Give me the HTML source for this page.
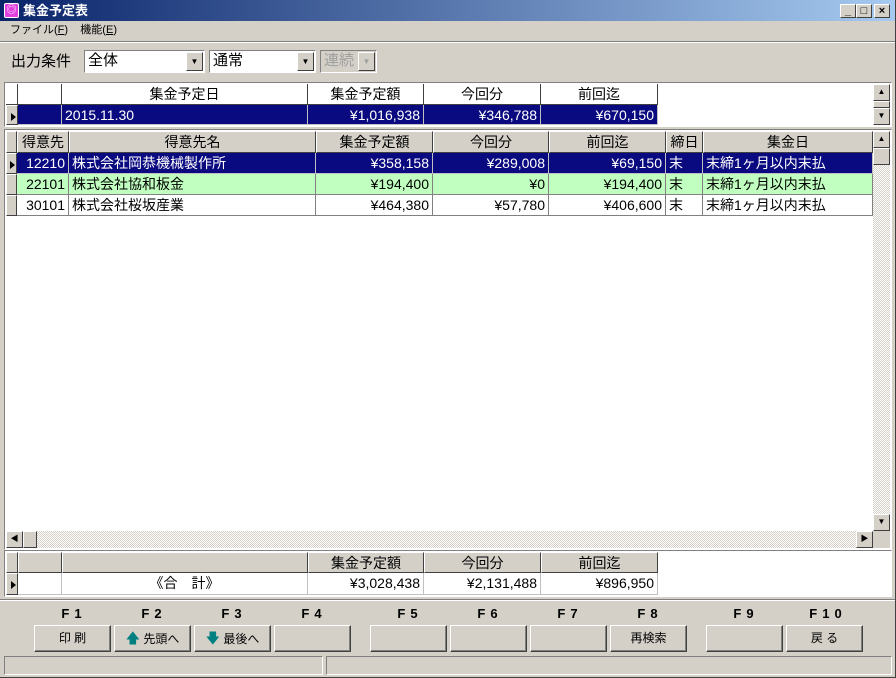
<!DOCTYPE html>
<html><head><meta charset="utf-8"><style>
*{box-sizing:border-box;margin:0;padding:0}
body{width:896px;height:678px;background:#d4d0c8;font-family:"Liberation Sans","Noto Sans CJK JP",sans-serif;position:relative;overflow:hidden;font-size:14px}
.a{position:absolute}
.c{position:absolute;overflow:hidden;white-space:nowrap;line-height:20px;padding:0 3px;border-right:1px solid #808080;border-bottom:1px solid #808080}
.h{background:#d4d0c8;text-align:center;border-top:1px solid #fff;border-left:1px solid #fff;border-right:1px solid #404040;border-bottom:1px solid #404040}
.w{background:#fff}
.s{background:#0a0a80;color:#fff;border-color:#c0c0c0}
.g{background:#c0ffc0}
.r{text-align:right}
.btn{position:absolute;background:#d4d0c8;border-top:1px solid #fff;border-left:1px solid #fff;border-right:1px solid #404040;border-bottom:1px solid #404040;box-shadow:inset -1px -1px 0 #808080;text-align:center;font-size:12px;line-height:25px}
.fk{position:absolute;font-weight:bold;font-size:13px;letter-spacing:5px;text-align:center;width:76px;top:606px}
.sb{position:absolute;background:#d4d0c8;border-top:1px solid #fff;border-left:1px solid #fff;border-right:1px solid #404040;border-bottom:1px solid #404040;font-size:8px;text-align:center;line-height:14px}
.sunk{position:absolute;border-top:1px solid #808080;border-left:1px solid #808080;border-right:1px solid #fff;border-bottom:1px solid #fff}
.tri{display:inline-block;width:0;height:0;border-top:4px solid transparent;border-bottom:4px solid transparent;border-left:5px solid #000;margin-top:6px}
</style></head><body>
<!-- title -->
<div class="a" style="left:0;top:0;width:896px;height:21px;background:linear-gradient(90deg,#0a246a,#a6caf0)"></div>
<div class="a" style="left:4px;top:3px;width:15px;height:15px;background:#e040e0;border:1px solid #fff;border-radius:2px;color:#fff;font-size:10px;text-align:center;line-height:13px">◎</div>
<div class="a" style="left:23px;top:2px;color:#fff;font-weight:bold;font-size:13px;line-height:17px">集金予定表</div>
<div class="sb" style="left:840px;top:4px;width:16px;height:14px;font-size:11px;font-weight:bold;line-height:12px">_</div>
<div class="sb" style="left:856px;top:4px;width:16px;height:14px;font-size:11px;line-height:12px">□</div>
<div class="sb" style="left:874px;top:4px;width:16px;height:14px;font-size:11px;font-weight:bold;line-height:12px">×</div>
<!-- menu -->
<div class="a" style="left:10px;top:23px;font-size:11px;line-height:14px">ファイル(<u>F</u>)&nbsp;&nbsp;&nbsp;&nbsp;機能(<u>E</u>)</div>
<div class="a" style="left:0;top:41px;width:896px;height:2px;border-top:1px solid #808080;border-bottom:1px solid #fff"></div>
<!-- toolbar -->
<div class="a" style="left:11px;top:52px;font-size:15px;line-height:20px">出力条件</div>
<div class="sunk" style="left:84px;top:50px;width:121px;height:23px;background:#fff;font-size:15px;line-height:20px;padding-left:3px">全体</div>
<div class="sb" style="left:186px;top:52px;width:17px;height:19px;line-height:17px">▼</div>
<div class="sunk" style="left:209px;top:50px;width:107px;height:23px;background:#fff;font-size:15px;line-height:20px;padding-left:3px">通常</div>
<div class="sb" style="left:297px;top:52px;width:17px;height:19px;line-height:17px">▼</div>
<div class="sunk" style="left:320px;top:50px;width:57px;height:23px;background:#d4d0c8;color:#a0a0a0;font-size:15px;line-height:20px;padding-left:3px">連続</div>
<div class="sb" style="left:358px;top:52px;width:17px;height:19px;line-height:17px;color:#a0a0a0">▼</div>
<!-- top grid -->
<div class="sunk" style="left:4px;top:82px;width:888px;height:45px;background:#fff"></div>
<div class="c w" style="left:6px;top:84px;width:12px;height:21px;border-right-color:#404040;border-bottom-color:#404040"></div>
<div class="c w" style="left:18px;top:84px;width:44px;height:21px;border-right-color:#404040;border-bottom-color:#404040"></div>
<div class="c w" style="left:62px;top:84px;width:246px;height:21px;text-align:center;border-right-color:#404040;border-bottom-color:#404040">集金予定日</div>
<div class="c w" style="left:308px;top:84px;width:116px;height:21px;text-align:center;border-right-color:#404040;border-bottom-color:#404040">集金予定額</div>
<div class="c w" style="left:424px;top:84px;width:117px;height:21px;text-align:center;border-right-color:#404040;border-bottom-color:#404040">今回分</div>
<div class="c w" style="left:541px;top:84px;width:117px;height:21px;text-align:center;border-right-color:#404040;border-bottom-color:#404040">前回迄</div>
<div class="c h" style="left:6px;top:105px;width:12px;height:20px;padding:0 0 0 3px"><span class="tri"></span></div>
<div class="c s" style="left:18px;top:105px;width:44px;height:20px"></div>
<div class="c s" style="left:62px;top:105px;width:246px;height:20px">2015.11.30</div>
<div class="c s r" style="left:308px;top:105px;width:116px;height:20px">¥1,016,938</div>
<div class="c s r" style="left:424px;top:105px;width:117px;height:20px">¥346,788</div>
<div class="c s r" style="left:541px;top:105px;width:117px;height:20px">¥670,150</div>
<div class="sb" style="left:873px;top:84px;width:17px;height:17px">▲</div>
<div class="sb" style="left:873px;top:101px;width:17px;height:7px"></div>
<div class="sb" style="left:873px;top:108px;width:17px;height:17px">▼</div>
<!-- main grid -->
<div class="sunk" style="left:4px;top:129px;width:888px;height:421px;background:#fff"></div>
<div class="a" style="left:873px;top:131px;width:17px;height:400px;background:repeating-conic-gradient(#d4d0c8 0 25%,#fff 0 50%) 0 0/2px 2px"></div>
<div class="a" style="left:6px;top:531px;width:867px;height:17px;background:repeating-conic-gradient(#d4d0c8 0 25%,#fff 0 50%) 0 0/2px 2px"></div>
<div class="sb" style="left:873px;top:131px;width:17px;height:17px">▲</div>
<div class="sb" style="left:873px;top:148px;width:17px;height:17px"></div>
<div class="sb" style="left:873px;top:514px;width:17px;height:17px">▼</div>
<div class="sb" style="left:6px;top:531px;width:17px;height:17px">◀</div>
<div class="sb" style="left:23px;top:531px;width:14px;height:17px"></div>
<div class="sb" style="left:856px;top:531px;width:17px;height:17px">▶</div>
<div class="a" style="left:873px;top:531px;width:17px;height:17px;background:#d4d0c8"></div>

<div class="c h" style="left:6px;top:131px;width:11px;height:22px"></div>
<div class="c h" style="left:17px;top:131px;width:52px;height:22px;padding:0 1px">得意先</div>
<div class="c h" style="left:69px;top:131px;width:247px;height:22px">得意先名</div>
<div class="c h" style="left:316px;top:131px;width:117px;height:22px">集金予定額</div>
<div class="c h" style="left:433px;top:131px;width:116px;height:22px">今回分</div>
<div class="c h" style="left:549px;top:131px;width:117px;height:22px">前回迄</div>
<div class="c h" style="left:666px;top:131px;width:37px;height:22px;padding:0 1px">締日</div>
<div class="c h" style="left:703px;top:131px;width:170px;height:22px">集金日</div>

<div class="c h" style="left:6px;top:153px;width:11px;height:21px;padding:0 0 0 2px"><span class="tri"></span></div>
<div class="c s r" style="left:17px;top:153px;width:52px;height:21px">12210</div>
<div class="c s" style="left:69px;top:153px;width:247px;height:21px">株式会社岡恭機械製作所</div>
<div class="c s r" style="left:316px;top:153px;width:117px;height:21px">¥358,158</div>
<div class="c s r" style="left:433px;top:153px;width:116px;height:21px">¥289,008</div>
<div class="c s r" style="left:549px;top:153px;width:117px;height:21px">¥69,150</div>
<div class="c s" style="left:666px;top:153px;width:37px;height:21px">末</div>
<div class="c s" style="left:703px;top:153px;width:170px;height:21px">末締1ヶ月以内末払</div>

<div class="c h" style="left:6px;top:174px;width:11px;height:21px"></div>
<div class="c g r" style="left:17px;top:174px;width:52px;height:21px">22101</div>
<div class="c g" style="left:69px;top:174px;width:247px;height:21px">株式会社協和板金</div>
<div class="c g r" style="left:316px;top:174px;width:117px;height:21px">¥194,400</div>
<div class="c g r" style="left:433px;top:174px;width:116px;height:21px">¥0</div>
<div class="c g r" style="left:549px;top:174px;width:117px;height:21px">¥194,400</div>
<div class="c g" style="left:666px;top:174px;width:37px;height:21px">末</div>
<div class="c g" style="left:703px;top:174px;width:170px;height:21px">末締1ヶ月以内末払</div>

<div class="c h" style="left:6px;top:195px;width:11px;height:21px"></div>
<div class="c w r" style="left:17px;top:195px;width:52px;height:21px">30101</div>
<div class="c w" style="left:69px;top:195px;width:247px;height:21px">株式会社桜坂産業</div>
<div class="c w r" style="left:316px;top:195px;width:117px;height:21px">¥464,380</div>
<div class="c w r" style="left:433px;top:195px;width:116px;height:21px">¥57,780</div>
<div class="c w r" style="left:549px;top:195px;width:117px;height:21px">¥406,600</div>
<div class="c w" style="left:666px;top:195px;width:37px;height:21px">末</div>
<div class="c w" style="left:703px;top:195px;width:170px;height:21px">末締1ヶ月以内末払</div>

<!-- total grid -->
<div class="sunk" style="left:4px;top:550px;width:888px;height:47px;background:#fff"></div>
<div class="c h" style="left:6px;top:552px;width:12px;height:21px"></div>
<div class="c h" style="left:18px;top:552px;width:44px;height:21px"></div>
<div class="c h" style="left:62px;top:552px;width:246px;height:21px"></div>
<div class="c h" style="left:308px;top:552px;width:116px;height:21px">集金予定額</div>
<div class="c h" style="left:424px;top:552px;width:117px;height:21px">今回分</div>
<div class="c h" style="left:541px;top:552px;width:117px;height:21px">前回迄</div>
<div class="c h" style="left:6px;top:573px;width:12px;height:22px;padding:0 0 0 3px"><span class="tri"></span></div>
<div class="c w" style="left:18px;top:573px;width:44px;height:22px;border-color:#c0c0c0"></div>
<div class="c w" style="left:62px;top:573px;width:246px;height:22px;text-align:center;border-color:#c0c0c0">《合　計》</div>
<div class="c w r" style="left:308px;top:573px;width:116px;height:22px;border-color:#c0c0c0">¥3,028,438</div>
<div class="c w r" style="left:424px;top:573px;width:117px;height:22px;border-color:#c0c0c0">¥2,131,488</div>
<div class="c w r" style="left:541px;top:573px;width:117px;height:22px;border-color:#c0c0c0">¥896,950</div>
<div class="a" style="left:0;top:599px;width:896px;height:2px;border-top:1px solid #808080;border-bottom:1px solid #fff"></div>

<!-- function keys -->
<div class="fk" style="left:36px">F1</div>
<div class="fk" style="left:116px">F2</div>
<div class="fk" style="left:196px">F3</div>
<div class="fk" style="left:276px">F4</div>
<div class="fk" style="left:372px">F5</div>
<div class="fk" style="left:452px">F6</div>
<div class="fk" style="left:532px">F7</div>
<div class="fk" style="left:612px">F8</div>
<div class="fk" style="left:708px">F9</div>
<div class="fk" style="left:790px">F10</div>
<div class="btn" style="left:34px;top:625px;width:77px;height:27px">印 刷</div>
<div class="btn" style="left:114px;top:625px;width:77px;height:27px"><span style="color:#008080;font-size:14px">🡅</span> 先頭へ</div>
<div class="btn" style="left:194px;top:625px;width:77px;height:27px"><span style="color:#008080;font-size:14px">🡇</span> 最後へ</div>
<div class="btn" style="left:274px;top:625px;width:77px;height:27px"></div>
<div class="btn" style="left:370px;top:625px;width:77px;height:27px"></div>
<div class="btn" style="left:450px;top:625px;width:77px;height:27px"></div>
<div class="btn" style="left:530px;top:625px;width:77px;height:27px"></div>
<div class="btn" style="left:610px;top:625px;width:77px;height:27px">再検索</div>
<div class="btn" style="left:706px;top:625px;width:77px;height:27px"></div>
<div class="btn" style="left:786px;top:625px;width:77px;height:27px">戻 る</div>

<!-- status -->
<div class="sunk" style="left:4px;top:656px;width:319px;height:19px"></div>
<div class="sunk" style="left:326px;top:656px;width:566px;height:19px"></div>
<div class="a" style="left:0;top:0;width:896px;height:678px;border-right:1px solid #404040;border-bottom:1px solid #404040"></div>
</body></html>
